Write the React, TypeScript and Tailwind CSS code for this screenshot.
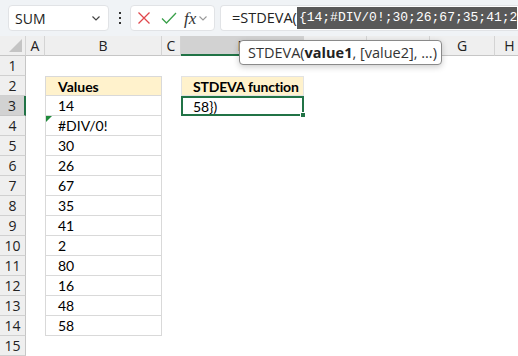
import React from "react";

const cols = [
  { label: "", w: 26 },
  { label: "A", w: 19 },
  { label: "B", w: 117 },
  { label: "C", w: 19 },
  { label: "D", w: 123 },
  { label: "", w: 63 },
  { label: "", w: 63 },
  { label: "G", w: 65 },
  { label: "H", w: 30 },
];

const values = ["14", "#DIV/0!", "30", "26", "67", "35", "41", "2", "80", "16", "48", "58"];

const ui = { fontFamily: '"Open Sans", "Noto Sans", sans-serif' };
const cellFont = { fontFamily: 'Lato, "Open Sans", sans-serif' };

function Toolbar() {
  return (
    <div className="flex h-[36px] items-start bg-[#f0f3f6] pt-[5px]" style={ui}>
      <div className="ml-[8px] flex h-[26px] w-[101px] items-center justify-between rounded-[4px] border border-[#e1e3e6] bg-white pl-[6px] pr-[6px] text-[14px] text-[#222]">
        <span>SUM</span>
        <svg width="12" height="12" viewBox="0 0 12 12">
          <path d="M2.5 4.5 L6 8 L9.5 4.5" fill="none" stroke="#444" strokeWidth="1.2" />
        </svg>
      </div>
      <div className="flex h-[26px] w-[21px] flex-col items-center justify-center gap-[3px]">
        <div className="h-[2px] w-[2px] bg-[#333]" />
        <div className="h-[2px] w-[2px] bg-[#333]" />
        <div className="h-[2px] w-[2px] bg-[#333]" />
      </div>
      <div className="flex h-[26px] w-[85px] items-center rounded-[4px] border border-[#e1e3e6] bg-white">
        <svg className="ml-[6px]" width="14" height="14" viewBox="0 0 14 14">
          <path d="M1.5 1.5 L12.5 12.5 M12.5 1.5 L1.5 12.5" stroke="#e0474c" strokeWidth="1.3" fill="none" />
        </svg>
        <svg className="ml-[10px]" width="16" height="14" viewBox="0 0 16 14">
          <path d="M1 7.5 L5.5 12 L15 2" stroke="#3aa04a" strokeWidth="1.3" fill="none" />
        </svg>
        <span
          className="ml-[7px] text-[17px] italic leading-none text-[#333]"
          style={{ fontFamily: '"Liberation Serif", "DejaVu Serif", serif' }}
        >
          fx
        </span>
        <svg className="ml-[2px]" width="10" height="10" viewBox="0 0 10 10">
          <path d="M1.5 3.5 L5 7 L8.5 3.5" fill="none" stroke="#999" strokeWidth="1.1" />
        </svg>
      </div>
      <div className="ml-[5px] flex h-[26px] flex-1 items-center overflow-hidden whitespace-nowrap rounded-l-[4px] border border-r-0 border-[#e1e3e6] bg-white pl-[11px] text-[14.5px] text-[#222]">
        <span>=STDEVA(</span>
        <span
          className="flex h-[22px] items-center bg-[#595959] pl-[2px] text-[13px] text-white"
          style={{ fontFamily: '"Liberation Mono", "DejaVu Sans Mono", monospace' }}
        >
          {"{14;#DIV/0!;30;26;67;35;41;2"}
        </span>
      </div>
    </div>
  );
}

function Header() {
  return (
    <div className="flex h-[20px]" style={ui}>
      {cols.map((c, i) => {
        const sel = c.label === "D";
        return (
          <div
            key={i}
            style={{ width: c.w }}
            className={
              "relative flex shrink-0 items-center justify-center text-[14px] text-[#222] " +
              (sel
                ? "border-b-2 border-b-[#217346] bg-[#d2d2d2] "
                : "border-b border-r border-b-[#c6c6c6] border-r-[#d4d4d4] bg-[#efefef] ")
            }
          >
            {i === 0 ? (
              <svg className="absolute bottom-[3px] right-[3px]" width="13" height="13" viewBox="0 0 13 13">
                <path d="M13 0 L13 13 L0 13 Z" fill="#c4c4c4" />
              </svg>
            ) : (
              c.label
            )}
          </div>
        );
      })}
    </div>
  );
}

function Row({ n }: { n: number }) {
  const selRow = n === 3;
  const tableRow = n >= 2 && n <= 14;
  const isHeader = n === 2;
  const bVal = n >= 3 && n <= 14 ? values[n - 3] : "";
  return (
    <div className="flex h-[20px]">
      <div
        style={{ ...ui, width: 26 }}
        className={
          "flex shrink-0 items-center justify-center text-[14px] text-[#222] " +
          (selRow
            ? "border-r-2 border-b border-r-[#217346] border-b-[#c6c6c6] bg-[#d2d2d2]"
            : "border-b border-r border-b-[#d0d0d0] border-r-[#c6c6c6] bg-[#efefef]")
        }
      >
        {n}
      </div>
      <div className="w-[19px] shrink-0 bg-white" />
      <div
        style={{ ...cellFont, width: 117 }}
        className={
          "relative flex shrink-0 items-center whitespace-nowrap pl-[12px] text-[14px] text-black " +
          (tableRow ? "border-b border-r border-[#d9d9d9] " : "") +
          (isHeader ? "border-t border-l bg-[#fff2cc] font-bold " : tableRow ? "border-l bg-white " : "bg-white ")
        }
      >
        {n === 4 && (
          <svg className="absolute left-0 top-0" width="6" height="6" viewBox="0 0 6 6">
            <path d="M0 0 L6 0 L0 6 Z" fill="#1e8a3a" />
          </svg>
        )}
        {isHeader ? "Values" : bVal}
      </div>
      <div className="w-[19px] shrink-0 bg-white" />
      <div
        style={{ ...cellFont, width: 123 }}
        className={
          "relative flex shrink-0 items-center whitespace-nowrap text-[14px] text-black " +
          (n === 2
            ? "border border-[#e3e3e3] bg-[#fff2cc] pl-[11px] text-[13.5px] font-bold tracking-[-0.2px]"
            : n === 3
            ? "z-10 border-2 border-[#217346] bg-white pl-[10px]"
            : "bg-white")
        }
      >
        {n === 2 && "STDEVA function"}
        {n === 3 && (
          <>
            58{"})"}
            <div className="absolute bottom-[-4px] right-[-4px] h-[6px] w-[6px] border border-white bg-[#217346]" />
          </>
        )}
      </div>
      <div className="flex-1 bg-white" />
    </div>
  );
}

function Tooltip() {
  return (
    <div
      className="absolute left-[239px] top-[40px] z-20 flex h-[25px] w-[203px] items-center whitespace-nowrap rounded-[4px] border border-[#8a8a8a] bg-white pl-[8px] text-[14.5px] text-[#333] shadow-[0_2px_6px_rgba(0,0,0,0.2)]"
      style={ui}
    >
      STDEVA(<b className="font-bold text-[#222]">value1</b>, [value2], ...)
    </div>
  );
}

export default function App() {
  return (
    <div className="relative h-[356px] w-[518px] overflow-hidden bg-white">
      <Toolbar />
      <Header />
      {Array.from({ length: 15 }, (_, i) => (
        <Row key={i} n={i + 1} />
      ))}
      <Tooltip />
    </div>
  );
}
